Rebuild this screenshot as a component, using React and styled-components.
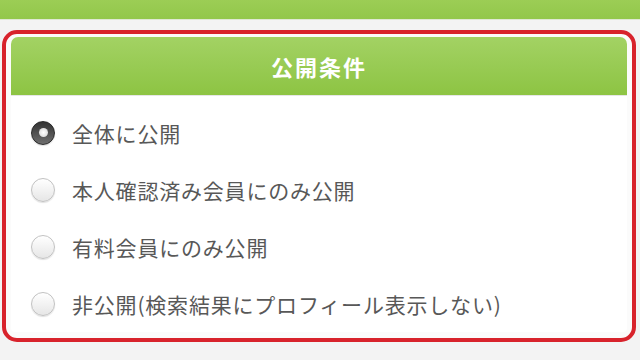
import React, { useState } from 'react';
import styled, { createGlobalStyle } from 'styled-components';

const GlobalStyle = createGlobalStyle`
  html, body {
    margin: 0;
    padding: 0;
    background-color: #f3f3f3;
    font-family: "Noto Sans CJK JP", "Noto Sans", sans-serif;
  }
`;

const TopBar = styled.div`
  height: 19px;
  background: linear-gradient(#9ccd55, #92c74a);
  border-bottom: 1px solid #dfe8d2;
`;

const Page = styled.div`
  padding: 10px 4px 0 2px;
`;

const Highlight = styled.div`
  border: 4px solid #d8232c;
  border-radius: 15px;
  padding: 3px 5px 6px 5px;
  background: #fbfbfb;
`;

const Panel = styled.div`
  background: #fff;
  border-radius: 7px 7px 4px 4px;
  overflow: hidden;
`;

const Header = styled.div`
  height: 58px;
  display: flex;
  align-items: center;
  justify-content: center;
  background: linear-gradient(#a3d264, #8dc443);
  color: #fff;
  font-size: 22px;
  font-weight: 700;
  letter-spacing: 2px;
  border-bottom: 1px solid #e6e6e6;
`;

const Options = styled.div`
  padding: 8px 0 0 20px;
`;

const Row = styled.label`
  height: 57px;
  display: flex;
  align-items: center;
  gap: 17px;
  color: #585858;
  font-size: 21px;
  letter-spacing: 0.8px;
  cursor: pointer;
`;

const Radio = styled.span`
  width: 24px;
  height: 24px;
  flex: none;
  box-sizing: border-box;
  border-radius: 50%;
  display: flex;
  align-items: center;
  justify-content: center;
  border: 1px solid ${(p) => (p.$checked ? '#2a2a2a' : '#c2c2c2')};
  background: ${(p) =>
    p.$checked
      ? 'linear-gradient(#333333, #6e6e6e)'
      : 'linear-gradient(#ffffff, #e6e6e6)'};
  box-shadow: 0 1px 1px rgba(0, 0, 0, 0.12);

  &::after {
    content: '';
    display: ${(p) => (p.$checked ? 'block' : 'none')};
    width: 9px;
    height: 9px;
    border-radius: 50%;
    background: radial-gradient(#ffffff, #d0d0d0);
  }
`;

const options = [
  '全体に公開',
  '本人確認済み会員にのみ公開',
  '有料会員にのみ公開',
  '非公開(検索結果にプロフィール表示しない)',
];

export default function App() {
  const [selected, setSelected] = useState(0);

  return (
    <>
      <GlobalStyle />
      <TopBar />
      <Page>
        <Highlight>
          <Panel>
            <Header>公開条件</Header>
            <Options>
              {options.map((text, i) => (
                <Row key={text} onClick={() => setSelected(i)}>
                  <Radio $checked={selected === i} />
                  {text}
                </Row>
              ))}
            </Options>
          </Panel>
        </Highlight>
      </Page>
    </>
  );
}
